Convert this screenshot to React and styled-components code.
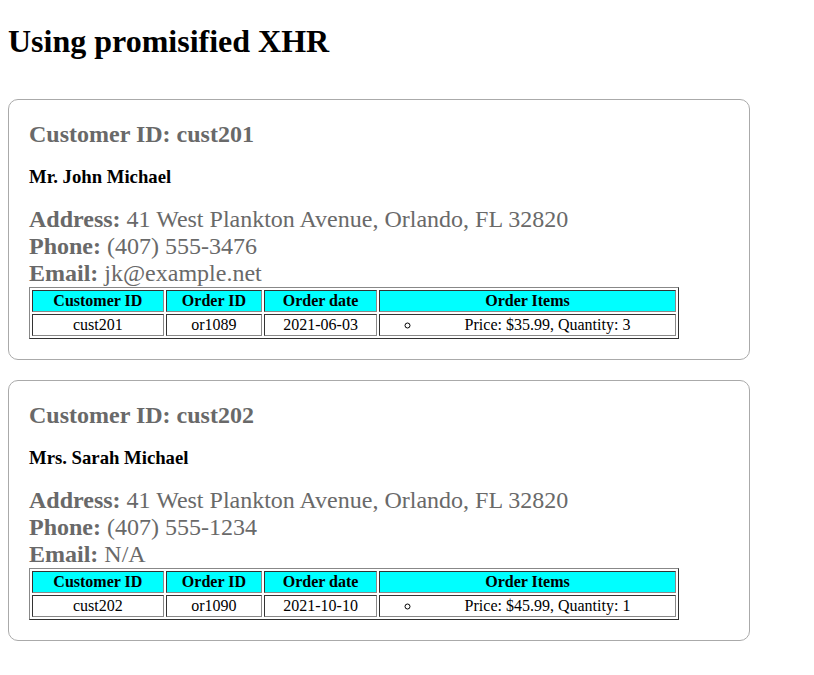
import React from "react";
import styled, { createGlobalStyle } from "styled-components";

const customers = [
  {
    id: "cust201",
    name: "Mr. John Michael",
    address: "41 West Plankton Avenue, Orlando, FL 32820",
    phone: "(407) 555-3476",
    email: "jk@example.net",
    orders: [
      { id: "or1089", date: "2021-06-03", items: [{ price: 35.99, qty: 3 }] },
    ],
  },
  {
    id: "cust202",
    name: "Mrs. Sarah Michael",
    address: "41 West Plankton Avenue, Orlando, FL 32820",
    phone: "(407) 555-1234",
    email: "N/A",
    orders: [
      { id: "or1090", date: "2021-10-10", items: [{ price: 45.99, qty: 1 }] },
    ],
  },
];

const GlobalStyle = createGlobalStyle`
  body {
    margin: 8px;
    font-family: "Liberation Serif", "Times New Roman", serif;
    color: #000;
    background: #fff;
  }
`;

const Title = styled.h1`
  font-size: 32px;
  margin: 15px 0 39px;
`;

const Card = styled.div`
  width: 700px;
  padding: 20px;
  border: 1px solid #aaa;
  border-radius: 10px;
  margin-bottom: 20px;
`;

const CustomerId = styled.h2`
  font-size: 24px;
  line-height: 28px;
  color: dimgray;
  margin: 0 0 18px;
`;

const Name = styled.h3`
  font-size: 18.72px;
  line-height: 22px;
  margin: 0 0 18px;
`;

const Details = styled.div`
  font-size: 24px;
  color: dimgray;
  line-height: 27px;
`;

const OrderTable = styled.table`
  width: 650px;
  border: 1px solid #000;
  border-color: #888 #333 #333 #888;
  border-spacing: 2px;
  font-size: 16px;
  th,
  td {
    border: 1px solid #000;
    border-color: #333 #888 #888 #333;
    padding: 1px;
    text-align: center;
  }
  th {
    background: cyan;
  }
`;

const ItemList = styled.ul`
  margin: 0;
  padding-left: 40px;
  list-style: circle;
`;

function CustomerCard({ customer }) {
  return (
    <Card>
      <CustomerId>Customer ID: {customer.id}</CustomerId>
      <Name>{customer.name}</Name>
      <Details>
        <b>Address:</b> {customer.address}
        <br />
        <b>Phone:</b> {customer.phone}
        <br />
        <b>Email:</b> {customer.email}
      </Details>
      <OrderTable>
        <thead>
          <tr>
            <th>Customer ID</th>
            <th>Order ID</th>
            <th>Order date</th>
            <th>Order Items</th>
          </tr>
        </thead>
        <tbody>
          {customer.orders.map((o) => (
            <tr key={o.id}>
              <td>{customer.id}</td>
              <td>{o.id}</td>
              <td>{o.date}</td>
              <td>
                <ItemList>
                  {o.items.map((it, i) => (
                    <li key={i}>
                      Price: ${it.price}, Quantity: {it.qty}
                    </li>
                  ))}
                </ItemList>
              </td>
            </tr>
          ))}
        </tbody>
      </OrderTable>
    </Card>
  );
}

export default function App() {
  return (
    <>
      <GlobalStyle />
      <Title>Using promisified XHR</Title>
      {customers.map((c) => (
        <CustomerCard key={c.id} customer={c} />
      ))}
    </>
  );
}
